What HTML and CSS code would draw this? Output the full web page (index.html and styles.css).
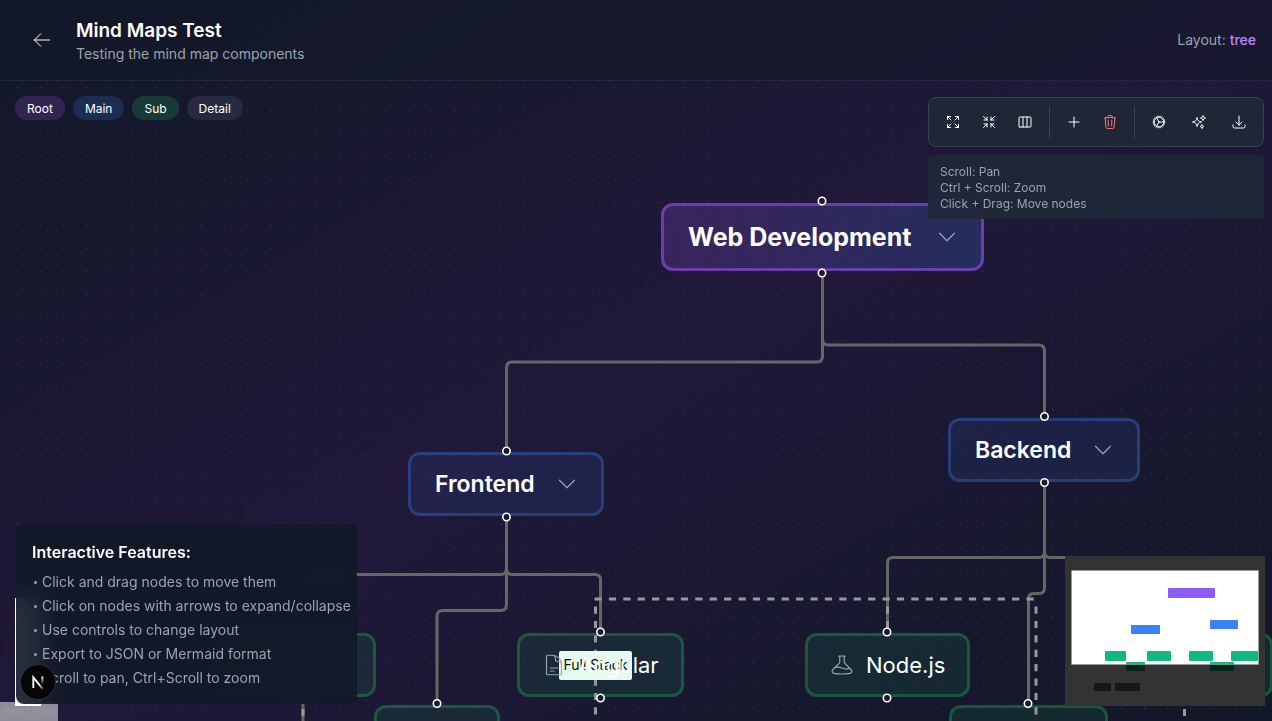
FILE: index.html
```html
<!DOCTYPE html>
<html lang="en">
<head>
<meta charset="utf-8">
<title>Mind Maps Test</title>
<link rel="stylesheet" href="styles.css">
</head>
<body>
<svg class="sprite" aria-hidden="true">
  <symbol id="chevron" viewBox="0 0 24 24"><path d="m19.5 8.25-7.5 7.5-7.5-7.5"/></symbol>
</svg>
<div class="page">
  <header class="header">
    <button class="back" type="button" aria-label="Back">
      <svg class="icon icon-md" viewBox="0 0 24 24"><path d="M10.5 19.5 3 12m0 0 7.5-7.5M3 12h18"/></svg>
    </button>
    <div class="heading">
      <h1>Mind Maps Test</h1>
      <p>Testing the mind map components</p>
    </div>
    <p class="layout-label">Layout: <span>tree</span></p>
  </header>

  <main class="canvas">
    <svg class="edges" aria-hidden="true">
      <defs>
        <pattern id="dots" x="6" y="-5" width="23" height="23" patternUnits="userSpaceOnUse"><circle cx="11.5" cy="11.5" r="0.8"/></pattern>
      </defs>
      <rect class="dots" width="100%" height="100%" fill="url(#dots)"/>
      <g class="edge">
        <path d="M822.5 192V275Q822.5 281 817 281H512Q506.500 281 506.500 287V370"/>
        <path d="M822.5 192V258Q822.5 264 828 264H1039Q1044.500 264 1044.500 270V336"/>
        <path d="M506.500 436V487Q506.500 493.500 501 493.500H300"/>
        <path d="M506.500 436V487Q506.500 493.500 512 493.500H595Q600.500 493.500 600.500 499V551"/>
        <path d="M506.500 436V523Q506.500 529.500 501 529.500H443Q437 529.500 437 535V622"/>
        <path d="M1044.500 402V470Q1044.500 476.500 1039 476.500H893Q887.500 476.500 887.500 482V551"/>
        <path d="M1044.500 402V470Q1044.500 476.500 1050 476.500H1178"/>
        <path d="M1044.500 402V507Q1044.500 512.500 1039 512.500H1034Q1028.500 512.500 1028.500 518V622"/>
        <path d="M303 617V640"/>
      </g>
      <g class="edge dashed">
        <path d="M595.500 525.500V640"/>
        <path d="M594.500 518H1037"/>
        <path d="M1036 525.500V640"/>
        <path d="M887.500 525.500V551"/>
        <path d="M303 628V640"/>
        <path d="M1184.500 628V635"/>
      </g>
    </svg>
    <span class="edge-label">Full Stack</span>

    <div class="node root"><span>Web Development</span><svg class="icon icon-node"><use href="#chevron"/></svg></div>
    <div class="node main frontend"><span>Frontend</span><svg class="icon icon-node"><use href="#chevron"/></svg></div>
    <div class="node main backend"><span>Backend</span><svg class="icon icon-node"><use href="#chevron"/></svg></div>
    <div class="node sub react"></div>
    <div class="node sub angular">
      <svg class="icon icon-node" viewBox="0 0 24 24"><path d="M19.5 14.25v-2.625a3.375 3.375 0 0 0-3.375-3.375h-1.5A1.125 1.125 0 0 1 13.5 7.125v-1.5a3.375 3.375 0 0 0-3.375-3.375H8.25m0 12.75h7.5m-7.5 3H12M10.5 2.25H5.625c-.621 0-1.125.504-1.125 1.125v17.25c0 .621.504 1.125 1.125 1.125h12.750c.621 0 1.125-.504 1.125-1.125V11.250a9 9 0 0 0-9-9Z"/></svg>
      <span>Angular</span>
    </div>
    <div class="node sub nodejs">
      <svg class="icon icon-node" viewBox="0 0 24 24"><path d="M9.750 3.104v5.714a2.250 2.250 0 0 1-.659 1.591L5 14.500M9.750 3.104c-.251.023-.501.050-.750.082m.750-.082a24.301 24.301 0 0 1 4.500 0m0 0v5.714c0 .597.237 1.170.659 1.591L19.800 15.300M14.250 3.104c.251.023.501.050.750.082M19.800 15.300l-1.570.393A9.065 9.065 0 0 1 12 15a9.065 9.065 0 0 0-6.230-.693L5 14.500m14.800.8 1.402 1.402c1.232 1.232.650 3.318-1.067 3.611A48.309 48.309 0 0 1 12 21c-2.773 0-5.491-.235-8.135-.687-1.718-.293-2.300-2.379-1.067-3.610L5 14.500"/></svg>
      <span>Node.js</span>
    </div>
    <div class="node sub database"></div>
    <div class="node sub vue"></div>
    <div class="node sub python"></div>

    <svg class="edges" aria-hidden="true">
      <g class="handle">
        <circle cx="822" cy="120" r="3.700"/><circle cx="822" cy="192" r="3.700"/>
        <circle cx="506.500" cy="370" r="3.700"/><circle cx="506.500" cy="436" r="3.700"/>
        <circle cx="1044.500" cy="335.500" r="3.700"/><circle cx="1044.500" cy="401.500" r="3.700"/>
        <circle cx="600.500" cy="551" r="3.700"/><circle cx="600.500" cy="617" r="3.700"/>
        <circle cx="887" cy="551" r="3.700"/><circle cx="887" cy="617" r="3.700"/>
        <circle cx="437" cy="622.500" r="3.700"/><circle cx="1028" cy="622.500" r="3.700"/>
      </g>
    </svg>

    <div class="legend">
      <span class="chip chip-root">Root</span>
      <span class="chip chip-main">Main</span>
      <span class="chip chip-sub">Sub</span>
      <span class="chip chip-detail">Detail</span>
    </div>

    <aside class="tools">
      <div class="toolbar">
        <button type="button" aria-label="Expand all"><svg class="icon icon-sm" viewBox="0 0 24 24"><path d="M3.750 3.750v4.500m0-4.500h4.500m-4.500 0L9 9M3.750 20.250v-4.500m0 4.500h4.500m-4.500 0L9 15M20.250 3.750h-4.500m4.500 0v4.500m0-4.500L15 9m5.250 11.250h-4.500m4.500 0v-4.500m0 4.500L15 15"/></svg></button>
        <button type="button" aria-label="Collapse all"><svg class="icon icon-sm" viewBox="0 0 24 24"><path d="M9 9V4.500M9 9H4.500M9 9 3.750 3.750M9 15v4.500M9 15H4.500M9 15l-5.250 5.250M15 9h4.500M15 9V4.500M15 9l5.250-5.250M15 15h4.500M15 15v4.500m0-4.500 5.250 5.250"/></svg></button>
        <button type="button" aria-label="Change layout"><svg class="icon icon-sm" viewBox="0 0 24 24"><path d="M9 4.500v15m6-15v15m-10.875 0h15.750c.621 0 1.125-.504 1.125-1.125V5.625c0-.621-.504-1.125-1.125-1.125H4.125C3.504 4.500 3 5.004 3 5.625v12.750c0 .621.504 1.125 1.125 1.125Z"/></svg></button>
        <span class="divider"></span>
        <button type="button" aria-label="Add node"><svg class="icon icon-sm" viewBox="0 0 24 24"><path d="M12 4.500v15m7.500-7.500h-15"/></svg></button>
        <button class="danger" type="button" aria-label="Delete node"><svg class="icon icon-sm" viewBox="0 0 24 24"><path d="m14.740 9-.346 9m-4.788 0L9.260 9m9.968-3.210c.342.052.682.107 1.022.166m-1.022-.165L18.160 19.673a2.250 2.250 0 0 1-2.244 2.077H8.084a2.250 2.250 0 0 1-2.244-2.077L4.772 5.790m14.456 0a48.108 48.108 0 0 0-3.478-.397m-12 .562c.340-.059.680-.114 1.022-.165m0 0a48.110 48.110 0 0 1 3.478-.397m7.500 0v-.916c0-1.180-.910-2.164-2.090-2.201a51.964 51.964 0 0 0-3.320 0c-1.180.037-2.090 1.022-2.090 2.201v.916m7.500 0a48.667 48.667 0 0 0-7.500 0"/></svg></button>
        <span class="divider"></span>
        <div class="group">
          <button type="button" aria-label="Settings"><svg class="icon icon-sm" viewBox="0 0 24 24"><path d="M4.500 12a7.500 7.500 0 0 0 15 0m-15 0a7.500 7.500 0 1 1 15 0m-15 0H3m16.500 0H21m-1.500 0H12m-8.457 3.077 1.410-.513m14.095-5.130 1.410-.513M5.106 17.785l1.150-.964m11.490-9.642 1.149-.964M7.501 19.795l.750-1.300m7.500-12.990.750-1.300m-6.063 16.658.260-1.477m2.605-14.772.260-1.477m0 17.726-.260-1.477M10.698 4.614l-.260-1.477M16.500 19.794l-.750-1.299M7.500 4.205 12 12m6.894 5.785-1.149-.964M6.256 7.178l-1.150-.964m15.352 8.864-1.410-.513M4.954 9.435l-1.410-.514M12.002 12l-3.750 6.495"/></svg></button>
          <button type="button" aria-label="Theme"><svg class="icon icon-sm" viewBox="0 0 24 24"><path d="M9.813 15.904 9 18.750l-.813-2.846a4.500 4.500 0 0 0-3.090-3.090L2.250 12l2.846-.813a4.500 4.500 0 0 0 3.090-3.090L9 5.250l.813 2.846a4.500 4.500 0 0 0 3.090 3.090L15.750 12l-2.846.813a4.500 4.500 0 0 0-3.090 3.090ZM18.259 8.715 18 9.750l-.259-1.035a3.375 3.375 0 0 0-2.455-2.456L14.250 6l1.036-.259a3.375 3.375 0 0 0 2.455-2.456L18 2.250l.259 1.035a3.375 3.375 0 0 0 2.456 2.456L21.750 6l-1.035.259a3.375 3.375 0 0 0-2.456 2.456ZM16.894 20.567 16.500 21.750l-.394-1.183a2.250 2.250 0 0 0-1.423-1.423L13.500 18.750l1.183-.394a2.250 2.250 0 0 0 1.423-1.423l.394-1.183.394 1.183a2.250 2.250 0 0 0 1.423 1.423l1.183.394-1.183.394a2.250 2.250 0 0 0-1.423 1.423Z"/></svg></button>
          <button type="button" aria-label="Export"><svg class="icon icon-sm" viewBox="0 0 24 24"><path d="M3 16.500v2.250A2.250 2.250 0 0 0 5.250 21h13.500A2.250 2.250 0 0 0 21 18.750V16.500M16.500 12 12 16.500m0 0L7.500 12m4.500 4.500V3"/></svg></button>
        </div>
      </div>
      <div class="hints">
        <p>Scroll: Pan</p>
        <p>Ctrl + Scroll: Zoom</p>
        <p>Click + Drag: Move nodes</p>
      </div>
    </aside>

    <div class="controls"></div>
    <a class="attribution" href="#">React Flow</a>

    <section class="features">
      <h2>Interactive Features:</h2>
      <ul>
        <li>Click and drag nodes to move them</li>
        <li>Click on nodes with arrows to expand/collapse</li>
        <li>Use controls to change layout</li>
        <li>Export to JSON or Mermaid format</li>
        <li>Scroll to pan, Ctrl+Scroll to zoom</li>
      </ul>
    </section>

    <svg class="minimap" viewBox="0 0 200 150" role="img" aria-label="Mini map">
      <rect width="200" height="150" fill="#fff"/>
      <g fill="#8b5cf6"><rect x="103" y="32" width="47" height="10" rx="1"/></g>
      <g fill="#3b82f6"><rect x="66" y="69" width="29" height="9" rx="1"/><rect x="145" y="64" width="28" height="9" rx="1"/></g>
      <g fill="#10b981"><rect x="40" y="95" width="21" height="10" rx="1"/><rect x="82" y="95" width="24" height="10" rx="1"/><rect x="124" y="95" width="24" height="10" rx="1"/><rect x="166" y="95" width="27" height="10" rx="1"/><rect x="61" y="106" width="19" height="9" rx="1"/><rect x="145" y="106" width="24" height="9" rx="1"/></g>
      <g fill="#6b7280"><rect x="29" y="127" width="17" height="8" rx="1"/><rect x="50" y="127" width="25" height="8" rx="1"/></g>
      <path fill="#000" fill-opacity=".8" fill-rule="evenodd" d="M0 0H200V150H0ZM6.500 14.500V108.500H193.500V14.500Z"/>
      <path fill="none" stroke="#999" d="M6.500 14.500H193.500V108.500H6.500Z" stroke-opacity=".7"/>
    </svg>

    <button class="dev-badge" type="button" aria-label="Developer tools">
      <svg viewBox="0 0 40 40">
        <defs>
          <linearGradient id="n-a" x1="0" y1="0" x2="1" y2="1"><stop offset=".6" stop-color="#fff"/><stop offset="1" stop-color="#fff" stop-opacity=".3"/></linearGradient>
          <linearGradient id="n-b" x1="0" y1="0" x2="0" y2="1"><stop offset="0" stop-color="#fff"/><stop offset="1" stop-color="#fff" stop-opacity="0"/></linearGradient>
        </defs>
        <path d="M14.500 27V14.500L25.500 28" fill="none" stroke="url(#n-a)" stroke-width="2.200"/>
        <rect x="24" y="13.500" width="2.200" height="10" fill="url(#n-b)"/>
      </svg>
    </button>
  </main>
</div>
</body>
</html>
```

FILE: styles.css
```css
* { box-sizing: border-box; }
body, h1, h2, p, ul { margin: 0; padding: 0; }
body {
  font-family: Inter, "Liberation Sans", sans-serif;
  font-size: 14px;
  line-height: 20px;
  color: #fff;
  background: #111827;
}
button { border: 0; background: none; color: inherit; font: inherit; }
.sprite { position: absolute; width: 0; height: 0; }
.page {
  display: flex;
  flex-direction: column;
  height: 100vh;
  overflow: hidden;
  background: linear-gradient(to bottom right, #111827, #201839 50%, #111827);
}

.icon {
  flex: none;
  fill: none;
  stroke: currentColor;
  stroke-width: 1.5;
  stroke-linecap: round;
  stroke-linejoin: round;
}
.icon-sm { width: 16px; height: 16px; }
.icon-md { width: 20px; height: 20px; stroke-width: 1.2; }
.icon-node { width: 24px; height: 24px; stroke-width: 1.2; color: #9ca3af; }

.header {
  display: flex;
  align-items: center;
  gap: 8px;
  flex: none;
  padding: 16px;
  min-height: 81px;
  background: rgba(17, 24, 39, .5);
  border-bottom: 1px solid #1f2937;
}
.back { display: flex; padding: 8px 16px; }
.heading { flex: 1; padding-top: 2px; }
.heading h1 { font-size: 19px; line-height: 26px; font-weight: 600; }
.heading p, .layout-label { color: #9ca3af; }
.layout-label span { color: #c084fc; font-weight: 500; }

.canvas { position: relative; flex: 1; overflow: hidden; }
.edges { position: absolute; inset: 0; width: 100%; height: 100%; }
#dots circle { fill: #34323a; }
.edge { fill: none; stroke: #666; stroke-width: 3; }
.dashed { stroke: #999; stroke-dasharray: 7.2 7.2; }
.handle { fill: #1a192b; stroke: #fff; stroke-width: 1.6; }

.edge-label {
  position: absolute;
  left: 559px;
  top: 570px;
  width: 73px;
  height: 29px;
  border-radius: 2px;
  background: #fff;
  color: #000;
  line-height: 28px;
  text-align: center;
}
.node {
  position: absolute;
  display: flex;
  align-items: center;
  justify-content: space-between;
  height: 64px;
  padding: 0 22px 0 24px;
  border: 3px solid;
  border-radius: 12px;
  font-size: 23px;
  line-height: 32px;
}
.root {
  left: 661px; top: 122px; width: 323px; height: 68px;
  font-size: 25px;
  font-weight: 700;
  background: linear-gradient(to right, rgba(168, 85, 247, .2), rgba(59, 130, 246, .2)) border-box;
  border-color: rgba(168, 85, 247, .5);
}
.main { font-weight: 600; background: rgba(59, 130, 246, .1); border-color: rgba(59, 130, 246, .3); }
.sub { justify-content: flex-start; gap: 12px; padding: 0 22px; font-size: 22px; background: rgba(34, 197, 94, .1); border-color: rgba(34, 197, 94, .3); }
.frontend { left: 408px; top: 371px; width: 196px; }
.backend { left: 948px; top: 337px; width: 192px; }
.react { left: 220px; top: 552px; width: 156px; }
.angular { left: 517px; top: 552px; width: 167px; }
.nodejs { left: 805px; top: 552px; width: 165px; }
.database { left: 1092px; top: 552px; width: 181px; }
.vue { left: 374px; top: 624px; width: 126px; }
.python { left: 949px; top: 624px; width: 159px; }

.legend { position: absolute; left: 15px; top: 15px; display: flex; gap: 8px; }
.chip { padding: 5px 12px 3px; border-radius: 12px; font-size: 12px; line-height: 16px; }
.chip-root { background: rgba(168, 85, 247, .2); }
.chip-main { background: rgba(59, 130, 246, .2); }
.chip-sub { background: rgba(34, 197, 94, .2); }
.chip-detail { background: rgba(107, 114, 128, .2); }

.tools { position: absolute; right: 8px; top: 16px; display: flex; flex-direction: column; gap: 8px; }
.toolbar {
  display: flex;
  align-items: center;
  gap: 4px;
  padding: 8px;
  background: rgba(31, 41, 55, .9);
  border: 1px solid #374151;
  border-radius: 8px;
}
.toolbar button { display: flex; padding: 8px; color: #fff; }
.toolbar .danger { color: #f87171; }
.divider { width: 1px; height: 32px; margin: 0 4px; background: #374151; }
.group { display: flex; gap: 8px; }
.hints {
  padding: 9px 12px 7px;
  border-radius: 4px;
  background: rgba(31, 41, 55, .9);
  backdrop-filter: blur(12px);
  color: #9ca3af;
  font-size: 12px;
  line-height: 16px;
}

.controls { position: absolute; left: 15px; bottom: 15px; width: 26px; height: 108px; background: #fefefe; }
.attribution {
  position: absolute;
  left: 0;
  bottom: 0;
  padding: 2px 3px;
  background: rgba(255, 255, 255, .5);
  color: #999;
  font-size: 10px;
  line-height: 15px;
  text-decoration: none;
}
.features {
  position: absolute;
  left: 16px;
  bottom: 17px;
  padding: 16px 6px 16px 16px;
  border-radius: 8px;
  background: rgba(17, 24, 39, .9);
  backdrop-filter: blur(12px);
}
.features h2 { margin-bottom: 8px; font-size: 16px; line-height: 24px; font-weight: 600; }
.features ul { display: flex; flex-direction: column; gap: 4px; list-style: none; color: #9ca3af; }
.features li { display: flex; align-items: center; gap: 5px; padding-left: 2px; }
.features li::before { content: ""; width: 3px; height: 3px; border-radius: 50%; background: currentColor; }

.minimap { position: absolute; right: 7px; bottom: 15px; width: 200px; height: 150px; }
.dev-badge {
  position: absolute;
  left: 20px;
  bottom: 21px;
  width: 36px;
  height: 36px;
  padding: 0;
  border: 1px solid #333;
  border-radius: 50%;
  background: #060608;
}
.dev-badge svg { display: block; width: 100%; height: 100%; }
```
